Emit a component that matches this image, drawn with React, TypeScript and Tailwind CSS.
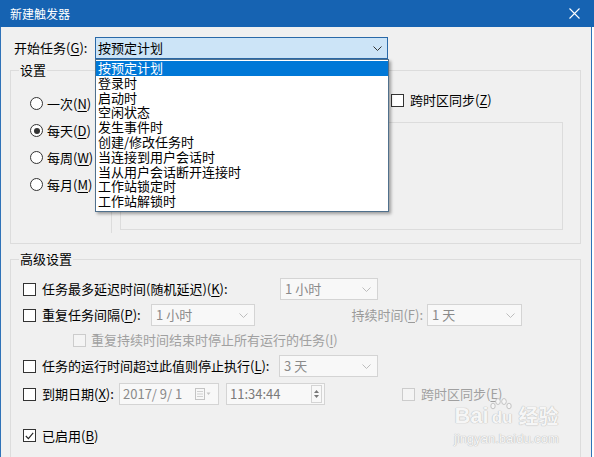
import React from "react";

const items = [
  "按预定计划",
  "登录时",
  "启动时",
  "空闲状态",
  "发生事件时",
  "创建/修改任务时",
  "当连接到用户会话时",
  "当从用户会话断开连接时",
  "工作站锁定时",
  "工作站解锁时",
];

const Chevron = ({ className = "" }: { className?: string }) => (
  <svg width="9" height="5" viewBox="0 0 9 5" className={className}>
    <path d="M0.5 0.5 L4.5 4.5 L8.5 0.5" fill="none" stroke="currentColor" strokeWidth="1" />
  </svg>
);

const CheckBox = ({ checked = false, disabled = false }: { checked?: boolean; disabled?: boolean }) => (
  <span
    className={`w-[13px] h-[13px] border flex items-center justify-center shrink-0 ${
      disabled ? "border-[#cccccc] bg-[#f4f4f4]" : "border-[#333333] bg-white"
    }`}
  >
    {checked && (
      <svg width="9" height="8" viewBox="0 0 9 8">
        <path d="M0.8 4 L3.4 6.6 L8.2 0.8" fill="none" stroke="#222" strokeWidth="1.1" />
      </svg>
    )}
  </span>
);

const Radio = ({ checked = false }: { checked?: boolean }) => (
  <span className="w-[13px] h-[13px] rounded-full border border-[#333333] bg-white flex items-center justify-center shrink-0">
    {checked && <span className="w-[6px] h-[6px] rounded-full bg-[#333333]" />}
  </span>
);

const Key = ({ k }: { k: string }) => <span className="underline underline-offset-2">{k}</span>;

const Select = ({ value, className = "" }: { value: string; className?: string }) => (
  <div
    className={`h-[22px] border border-[#d4d4d4] bg-[#f8f8f8] flex items-center justify-between pl-[4px] pr-[6px] text-[#8a8a8a] ${className}`}
  >
    <span>{value}</span>
    <Chevron className="text-[#bdbdbd]" />
  </div>
);

export default function App() {
  return (
    <div className="w-[594px] h-[457px] bg-white overflow-hidden relative font-['Noto_Sans_CJK_SC',sans-serif] text-[13px] leading-[16px] text-black">
      {/* title bar */}
      <div className="h-[27px] bg-[#1663b2] flex items-center justify-between pl-[10px] pr-[14px] text-white text-[12px]">
        <span>新建触发器</span>
        <svg width="11" height="11" viewBox="0 0 11 11">
          <path d="M0.5 0.5 L10.5 10.5 M10.5 0.5 L0.5 10.5" stroke="#ffffff" strokeWidth="1.1" />
        </svg>
      </div>

      <div className="w-[592px] h-[430px] bg-[#f0f0f0] border-l border-r border-[#2f72b8] flex flex-col overflow-hidden">
        {/* begin task */}
        <div className="flex items-center mt-[10px] h-[22px] relative z-20">
          <span className="ml-[13px] w-[81px]">
            开始任务(<Key k="G" />):
          </span>
          <div className="relative w-[293px] h-[22px] border border-[#2a69a8] bg-[#cce4f7] flex items-center justify-between pl-[2px] pr-[5px]">
            <span>按预定计划</span>
            <Chevron className="text-[#333]" />
            <div className="absolute left-[-1px] top-[21px] w-[294px] border border-[#50708c] bg-white shadow-[2px_2px_3px_rgba(0,0,0,0.35)] pt-[1px] pb-[2px]">
              {items.map((t, i) => (
                <div
                  key={t}
                  className={`h-[14.8px] leading-[14.8px] pl-[2px] ${i === 0 ? "bg-[#0078d7] text-white" : ""}`}
                >
                  {t}
                </div>
              ))}
            </div>
          </div>
        </div>

        {/* settings */}
        <fieldset className="ml-[9px] mt-[3px] w-[571px] h-[182px] border border-[#dcdcdc] shrink-0">
          <legend className="ml-[8px] px-[1px] leading-[16px]">设置</legend>
          <div className="flex">
            <div className="w-[100px] pl-[19px] pt-[12px] flex flex-col">
              {[
                ["一次", "N", false],
                ["每天", "D", true],
                ["每周", "W", false],
                ["每月", "M", false],
              ].map(([t, k, c]) => (
                <div key={t as string} className="h-[27px] flex items-center gap-[4px]">
                  <Radio checked={c as boolean} />
                  <span>
                    {t}(<Key k={k as string} />)
                  </span>
                </div>
              ))}
            </div>
            <div className="mt-[7px] h-[148px] border-l border-[#dcdcdc] pl-[8px] flex flex-col">
              <div className="h-[30px] flex items-center pl-[271px] gap-[6px]">
                <CheckBox />
                <span>
                  跨时区同步(<Key k="Z" />)
                </span>
              </div>
              <div className="mt-[7px] w-[443px] h-[108px] border border-[#dcdcdc]" />
            </div>
          </div>
        </fieldset>

        {/* advanced */}
        <fieldset className="ml-[9px] mt-[7px] w-[571px] h-[220px] border border-[#dcdcdc] shrink-0 pl-[12px]">
          <legend className="ml-[-4px] px-[1px] leading-[16px]">高级设置</legend>

          <div className="mt-[11px] h-[22px] flex items-center">
            <div className="w-[257px] flex items-center gap-[6px]">
              <CheckBox />
              <span>
                任务最多延迟时间(随机延迟)(<Key k="K" />):
              </span>
            </div>
            <Select value="1 小时" className="w-[98px]" />
          </div>

          <div className="mt-[4px] h-[22px] flex items-center">
            <div className="w-[128px] flex items-center gap-[6px]">
              <CheckBox />
              <span>
                重复任务间隔(<Key k="P" />):
              </span>
            </div>
            <Select value="1 小时" className="w-[104px]" />
            <span className="w-[172px] text-right pr-[4px] text-[#9a9a9a]">
              持续时间(<Key k="F" />):
            </span>
            <Select value="1 天" className="w-[95px]" />
          </div>

          <div className="mt-[4px] h-[20px] flex items-center ml-[50px] gap-[5px]">
            <CheckBox disabled />
            <span className="text-[#a0a0a0]">
              重复持续时间结束时停止所有运行的任务(<Key k="I" />)
            </span>
          </div>

          <div className="mt-[5px] h-[22px] flex items-center">
            <div className="w-[256px] flex items-center gap-[6px]">
              <CheckBox />
              <span>
                任务的运行时间超过此值则停止执行(<Key k="L" />):
              </span>
            </div>
            <Select value="3 天" className="w-[99px]" />
          </div>

          <div className="mt-[6px] h-[22px] flex items-center">
            <div className="w-[96px] flex items-center gap-[6px]">
              <CheckBox />
              <span>
                到期日期(<Key k="X" />):
              </span>
            </div>
            <div className="w-[100px] h-[22px] border border-[#d4d4d4] bg-[#f8f8f8] flex items-center pl-[3px] pr-[7px] text-[#8a8a8a]">
              <span>2017/ 9/ 1</span>
              <svg width="16" height="12" viewBox="0 0 16 12" className="ml-auto">
                <rect x="0.5" y="0.5" width="9" height="11" fill="none" stroke="#c4c4c4" />
                <path d="M2 3.5 H8 M2 6 H8 M2 8.5 H8" stroke="#d0d0d0" />
                <path d="M11.5 4.5 L15.5 4.5 L13.5 7 Z" fill="#c4c4c4" />
              </svg>
            </div>
            <div className="ml-[7px] w-[99px] h-[22px] border border-[#d4d4d4] bg-[#f8f8f8] flex items-center pl-[3px] pr-[2px] text-[#7a7a7a]">
              <span>11:34:44</span>
              <div className="ml-auto w-[11px] h-[18px] border border-[#d4d4d4] flex flex-col items-center justify-center gap-[2px]">
                <svg width="5" height="3" viewBox="0 0 5 3">
                  <path d="M0 3 L2.5 0 L5 3 Z" fill="#777" />
                </svg>
                <svg width="5" height="3" viewBox="0 0 5 3">
                  <path d="M0 0 L2.5 3 L5 0 Z" fill="#777" />
                </svg>
              </div>
            </div>
            <div className="ml-[77px] flex items-center gap-[6px]">
              <CheckBox disabled />
              <span className="text-[#a0a0a0]">
                跨时区同步(<Key k="E" />)
              </span>
            </div>
          </div>

          <div className="mt-[20px] h-[21px] flex items-center gap-[6px]">
            <CheckBox checked />
            <span>
              已启用(<Key k="B" />)
            </span>
          </div>
        </fieldset>
      </div>

      {/* watermark */}
      <div className="absolute left-[454px] top-[405px] flex flex-col items-center text-[#f6f6f6] font-['Liberation_Sans',sans-serif] [text-shadow:0_0_1px_#b8b8b8,0_0_1px_#b8b8b8]">
        <div className="flex items-end font-bold text-[22px] leading-[22px]">
          <span>Bai</span>
          <span className="relative mx-[1px] text-[17px] leading-[18px] px-[2px]">
            du
            <svg width="22" height="12" viewBox="0 0 22 12" className="absolute left-[0px] top-[-11px]">
              <g fill="#f6f6f6" stroke="#b8b8b8" strokeWidth="0.8">
                <ellipse cx="3" cy="8" rx="2.2" ry="2.8" />
                <ellipse cx="8" cy="3.5" rx="2.3" ry="3" />
                <ellipse cx="14" cy="3.5" rx="2.3" ry="3" />
                <ellipse cx="19" cy="8" rx="2.2" ry="2.8" />
              </g>
            </svg>
          </span>
          <span className="font-['Noto_Sans_CJK_SC',sans-serif] text-[20px] ml-[3px]">经验</span>
        </div>
        <span className="text-[13px] leading-[14px] mt-[5px]">jingyan.baidu.com</span>
      </div>
    </div>
  );
}
